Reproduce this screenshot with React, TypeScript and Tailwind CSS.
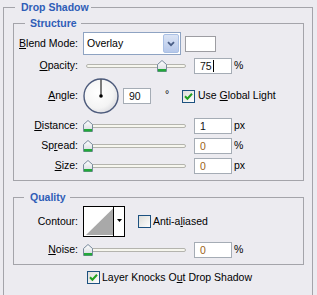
import type { ReactNode } from "react";

const font = "font-['Liberation_Sans',Arial,sans-serif]";

function Check({ checked }: { checked?: boolean }) {
  return (
    <svg width="13" height="13" viewBox="0 0 13 13" className="shrink-0">
      <defs>
        <linearGradient id="cbfill" x1="0" y1="0" x2="1" y2="1">
          <stop offset="0" stopColor="#dcdcd8" />
          <stop offset="1" stopColor="#ffffff" />
        </linearGradient>
      </defs>
      <rect x="0.5" y="0.5" width="12" height="12" fill="url(#cbfill)" stroke="#1c5180" />
      {checked && (
        <path d="M3 6.3 L5.4 8.8 L10 3.8" fill="none" stroke="#21a121" strokeWidth="2" />
      )}
    </svg>
  );
}

function Thumb({ left }: { left: number }) {
  return (
    <svg width="10" height="12" viewBox="0 0 10 12" className="absolute top-[2px]" style={{ left }}>
      <defs>
        <linearGradient id="thumbfill" x1="0" y1="0" x2="0" y2="1">
          <stop offset="0" stopColor="#ffffff" />
          <stop offset="1" stopColor="#d5d9de" />
        </linearGradient>
      </defs>
      <path d="M0.5 4.5 L5 0.5 L9.5 4.5 V11.5 H0.5 Z" fill="url(#thumbfill)" stroke="#788a9c" />
      <rect x="1" y="9" width="8" height="2.5" fill="#22a83a" />
    </svg>
  );
}

function Slider({ value }: { value: number }) {
  return (
    <div className="relative w-[107px] h-[16px] shrink-0">
      <div className="absolute left-[3px] top-[6px] w-[100px] h-[4px] rounded-full border border-[#b4b4ae] bg-[#f6f6ee]" />
      <Thumb left={Math.round(value * 0.99)} />
    </div>
  );
}

function NumBox({ value, caret, w = "w-[38px]", zero }: { value: string; caret?: boolean; w?: string; zero?: boolean }) {
  return (
    <div className={`${w} h-[16px] shrink-0 border border-[#a5acb5] bg-white pl-[5px] flex items-center leading-none ${zero ? "text-[#9c6420]" : "text-[#111]"}`}>
      {value}
      {caret && <span className="ml-[1px] w-[1px] h-[12px] bg-black" />}
    </div>
  );
}

function Label({ children }: { children: ReactNode }) {
  return <div className="w-[64px] shrink-0 text-right mr-[5px] whitespace-nowrap">{children}</div>;
}

function U({ children }: { children: ReactNode }) {
  return <span className="underline underline-offset-[1px]">{children}</span>;
}

function SliderRow({ label, value, text, unit, zero }: { label: ReactNode; value: number; text: string; unit: string; zero?: boolean }) {
  return (
    <div className="flex items-center h-[16px]">
      <Label>{label}</Label>
      <Slider value={value} />
      <div className="ml-[4px]">
        <NumBox value={text} caret={text === "75"} zero={zero} />
      </div>
      <span className="ml-[2px]">{unit}</span>
    </div>
  );
}

function Dial() {
  return (
    <svg width="36" height="36" viewBox="0 0 36 36" className="shrink-0">
      <defs>
        <radialGradient id="dialfill" cx="0.4" cy="0.4" r="0.65">
          <stop offset="0" stopColor="#ffffff" />
          <stop offset="0.7" stopColor="#f4f4f4" />
          <stop offset="1" stopColor="#dcdce0" />
        </radialGradient>
      </defs>
      <circle cx="18" cy="18" r="17" fill="url(#dialfill)" stroke="#4d5b7c" strokeWidth="1.4" />
      <line x1="18" y1="18" x2="18" y2="1.5" stroke="#000" strokeWidth="1" />
      <circle cx="18" cy="18" r="1.8" fill="#000" />
    </svg>
  );
}

function Contour() {
  return (
    <svg width="42" height="31" viewBox="0 0 42 31" className="shrink-0">
      <rect x="0.5" y="0.5" width="41" height="30" fill="#fff" stroke="#000" />
      <polygon points="3,29 30.5,2 30.5,29" fill="#a9a9a9" />
      <line x1="30.5" y1="1" x2="30.5" y2="30" stroke="#000" />
      <polygon points="34,13 39,13 36.5,16" fill="#000" />
    </svg>
  );
}

function Legend({ children, pad }: { children: ReactNode; pad: string }) {
  return <legend className={`${pad} leading-[14px] font-bold text-[#2f5db7]`}>{children}</legend>;
}

export default function App() {
  return (
    <div className={`w-[317px] h-[295px] overflow-hidden bg-[#ecebf0] text-[10.5px] text-black ${font}`}>
      <div className="pl-[3px]">
        <fieldset className="w-[310px] h-[320px] border border-[#a4a4aa] pl-[9px] pr-[8px]">
          <Legend pad="ml-[2px] pl-[6px] pr-[2px]">Drop Shadow</Legend>

          <fieldset className="mt-[2px] border border-[#a4a4aa] pb-[6px]">
            <Legend pad="ml-[11px] pl-[5px] pr-[4px]">Structure</Legend>

            <div className="flex items-center h-[23px] mt-[2px]">
              <Label><U>B</U>lend Mode:</Label>
              <div className="w-[98px] h-[23px] border border-[#8ea3c2] bg-white flex items-stretch shrink-0">
                <div className="flex-1 pl-[3px] flex items-center">Overlay</div>
                <div className="w-[16px] my-[1px] mr-[1px] rounded-[2px] border border-[#aac0e4] bg-gradient-to-b from-[#dbe4f5] to-[#b6c8ea] flex items-center justify-center">
                  <svg width="8" height="6" viewBox="0 0 8 6">
                    <path d="M1 1.2 L4 4.2 L7 1.2" fill="none" stroke="#4a5e86" strokeWidth="1.8" />
                  </svg>
                </div>
              </div>
              <div className="ml-[4px] w-[31px] h-[16px] border border-[#9d9da2] bg-white" />
            </div>

            <div className="mt-[3px]">
              <SliderRow label={<><U>O</U>pacity:</>} value={75} text="75" unit="%" />
            </div>

            <div className="flex items-center h-[36px] mt-[4px]">
              <Label><U>A</U>ngle:</Label>
              <Dial />
              <div className="ml-[4px]">
                <NumBox value="90" w="w-[28px]" />
              </div>
              <div className="w-[31px] pl-[14px] self-start mt-[9px] shrink-0">°</div>
              <Check checked />
              <span className="ml-[3px] whitespace-nowrap">Use <U>G</U>lobal Light</span>
            </div>

            <div className="mt-[4px]">
              <SliderRow label={<><U>D</U>istance:</>} value={0} text="1" unit="px" />
            </div>
            <div className="mt-[4px]">
              <SliderRow label={<>Sp<U>r</U>ead:</>} value={0} text="0" unit="%" zero />
            </div>
            <div className="mt-[4px]">
              <SliderRow label={<><U>S</U>ize:</>} value={0} text="0" unit="px" zero />
            </div>
          </fieldset>

          <fieldset className="mt-[9px] border border-[#a4a4aa] pb-[6px]">
            <Legend pad="ml-[10px] pl-[6px] pr-[4px]">Quality</Legend>

            <div className="flex items-center h-[31px] mt-[2px]">
              <Label>Contour:</Label>
              <Contour />
              <div className="ml-[13px]">
                <Check />
              </div>
              <span className="ml-[2px] whitespace-nowrap">Anti-a<U>l</U>iased</span>
            </div>

            <div className="mt-[5px]">
              <SliderRow label={<><U>N</U>oise:</>} value={0} text="0" unit="%" zero />
            </div>
          </fieldset>

          <div className="flex items-center h-[13px] mt-[6px] pl-[74px]">
            <Check checked />
            <span className="ml-[2px] whitespace-nowrap">Layer Knocks O<U>u</U>t Drop Shadow</span>
          </div>
        </fieldset>
      </div>
    </div>
  );
}
